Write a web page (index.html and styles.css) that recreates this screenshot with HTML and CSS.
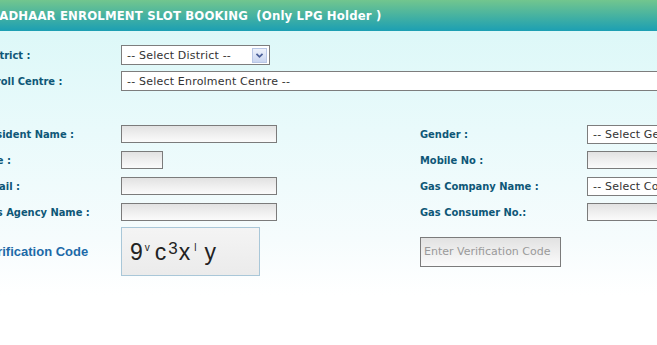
FILE: index.html
```html
<!DOCTYPE html>
<html>
<head>
<meta charset="utf-8">
<link rel="stylesheet" href="styles.css">
</head>
<body>
<div class="page">
  <header class="title">
    <h1>AADHAAR ENROLMENT SLOT BOOKING&nbsp; (Only LPG Holder )</h1>
  </header>
  <main class="form">
    <section class="grid top">
      <label class="lbl">District :</label>
      <div class="select sel-district"><span>-- Select District --</span>
        <span class="arrow"><svg width="15" height="15" viewBox="0 0 15 15"><path d="M4 5.5 L7.5 9 L11 5.5" fill="none" stroke="#4b5f98" stroke-width="2"/></svg></span>
      </div>
      <label class="lbl">Enroll Centre :</label>
      <div class="select sel-centre"><span>-- Select Enrolment Centre --</span></div>
    </section>

    <section class="grid fields">
      <label class="lbl">Resident Name :</label>
      <div><input class="inp wide" type="text"></div>
      <label class="lbl">Gender :</label>
      <div class="select sel-right"><span>-- Select Gender --</span></div>

      <label class="lbl">Age :</label>
      <div><input class="inp age" type="text"></div>
      <label class="lbl">Mobile No :</label>
      <div><input class="inp right" type="text"></div>

      <label class="lbl">Email :</label>
      <div><input class="inp wide" type="text"></div>
      <label class="lbl">Gas Company Name :</label>
      <div class="select sel-right"><span>-- Select Company --</span></div>

      <label class="lbl">Gas Agency Name :</label>
      <div><input class="inp wide" type="text"></div>
      <label class="lbl">Gas Consumer No.:</label>
      <div><input class="inp right" type="text"></div>
    </section>

    <section class="grid verify">
      <label class="vlbl">Verification Code</label>
      <div class="captcha"><span class="big">9</span><span class="sm">v</span><span class="big gap">c</span><span class="mid">3</span><span class="big">x</span><span class="sm bar">l</span><span class="big gap2">y</span></div>
      <div class="vcode"><input class="inp code" type="text" placeholder="Enter Verification Code"></div>
    </section>
  </main>
</div>
</body>
</html>
```
FILE: styles.css
```css
html, body {
  margin: 0;
  padding: 0;
  background: #ffffff;
}
.page {
  width: 657px;
  height: 345px;
  overflow: hidden;
  font-family: "DejaVu Sans Condensed", "DejaVu Sans", sans-serif;
  background: linear-gradient(#ddf8f8 31px, #e9fafb 130px, #f6fcfd 240px, #ffffff 295px);
}
.title {
  height: 31px;
  background: linear-gradient(#72c68e, #1c9fb3);
  display: flex;
  align-items: center;
  overflow: hidden;
}
.title h1 {
  margin: 0 0 0 -10px;
  font-size: 13px;
  font-weight: bold;
  letter-spacing: 0.15px;
  color: #ffffff;
  white-space: nowrap;
}
.form {
  margin-left: -18px;
  width: 800px;
}
.grid {
  display: grid;
  grid-template-columns: 139px 299px 167px 1fr;
  align-items: center;
}
.top {
  grid-template-columns: 139px 1fr;
  row-gap: 6px;
  padding-top: 14px;
}
.fields {
  margin-top: 33px;
  grid-auto-rows: 20px;
  row-gap: 6px;
}
.verify {
  margin-top: 5px;
  grid-template-columns: 139px 299px 1fr;
}
.lbl {
  font-size: 11px;
  font-weight: bold;
  color: #0e5777;
  white-space: nowrap;
}
.select {
  box-sizing: border-box;
  height: 20px;
  border: 1px solid #7d7d7d;
  background: #ffffff;
  font-family: "DejaVu Sans", sans-serif;
  font-size: 11px;
  letter-spacing: 0.2px;
  color: #333333;
  display: flex;
  align-items: center;
  padding-left: 5px;
  white-space: nowrap;
  overflow: hidden;
}
.sel-district {
  width: 149px;
  justify-content: space-between;
  padding-right: 2px;
}
.sel-centre {
  width: 600px;
}
.sel-right {
  width: 150px;
  height: 19px;
}
.arrow {
  box-sizing: border-box;
  width: 15px;
  height: 15px;
  border: 1px solid #b9c7e6;
  background: linear-gradient(#eef2fb, #c9d5f0);
  display: flex;
  align-items: center;
  justify-content: center;
}
.arrow svg {
  display: block;
}
.inp {
  display: block;
  box-sizing: border-box;
  height: 18px;
  margin: 0;
  padding: 0 3px;
  border: 1px solid #7b7b7b;
  background: linear-gradient(#e2e2e2, #fbfbfb);
  font-family: "DejaVu Sans", sans-serif;
  font-size: 11px;
  letter-spacing: 0.2px;
  outline: none;
}
.wide { width: 156px; }
.age { width: 42px; }
.right { width: 150px; }
.code {
  width: 141px;
  height: 30px;
  padding-left: 3px;
  letter-spacing: 0;
}
.code::placeholder {
  color: #9a9a9a;
}
.vlbl {
  font-family: "Liberation Sans", Arial, sans-serif;
  font-size: 13px;
  font-weight: bold;
  color: #1d6aa8;
  white-space: nowrap;
}
.captcha {
  box-sizing: border-box;
  width: 139px;
  height: 49px;
  border: 1px solid #a9c7d8;
  background: linear-gradient(#f4f4f4, #ebebeb);
  font-family: "Liberation Sans", Arial, sans-serif;
  color: #222222;
  display: flex;
  align-items: baseline;
  padding: 13px 0 0 8px;
  line-height: 1;
}
.captcha .big { font-size: 23px; }
.captcha .gap { margin-left: 5px; }
.captcha .gap2 { margin-left: 8px; }
.captcha .sm { font-size: 10px; position: relative; top: -9px; margin-left: 2px; }
.captcha .mid { font-size: 17px; position: relative; top: -6px; margin: 0 1px 0 2px; }
.captcha .bar { margin-left: 4px; }
.vcode {
  padding-left: 0;
}
```
